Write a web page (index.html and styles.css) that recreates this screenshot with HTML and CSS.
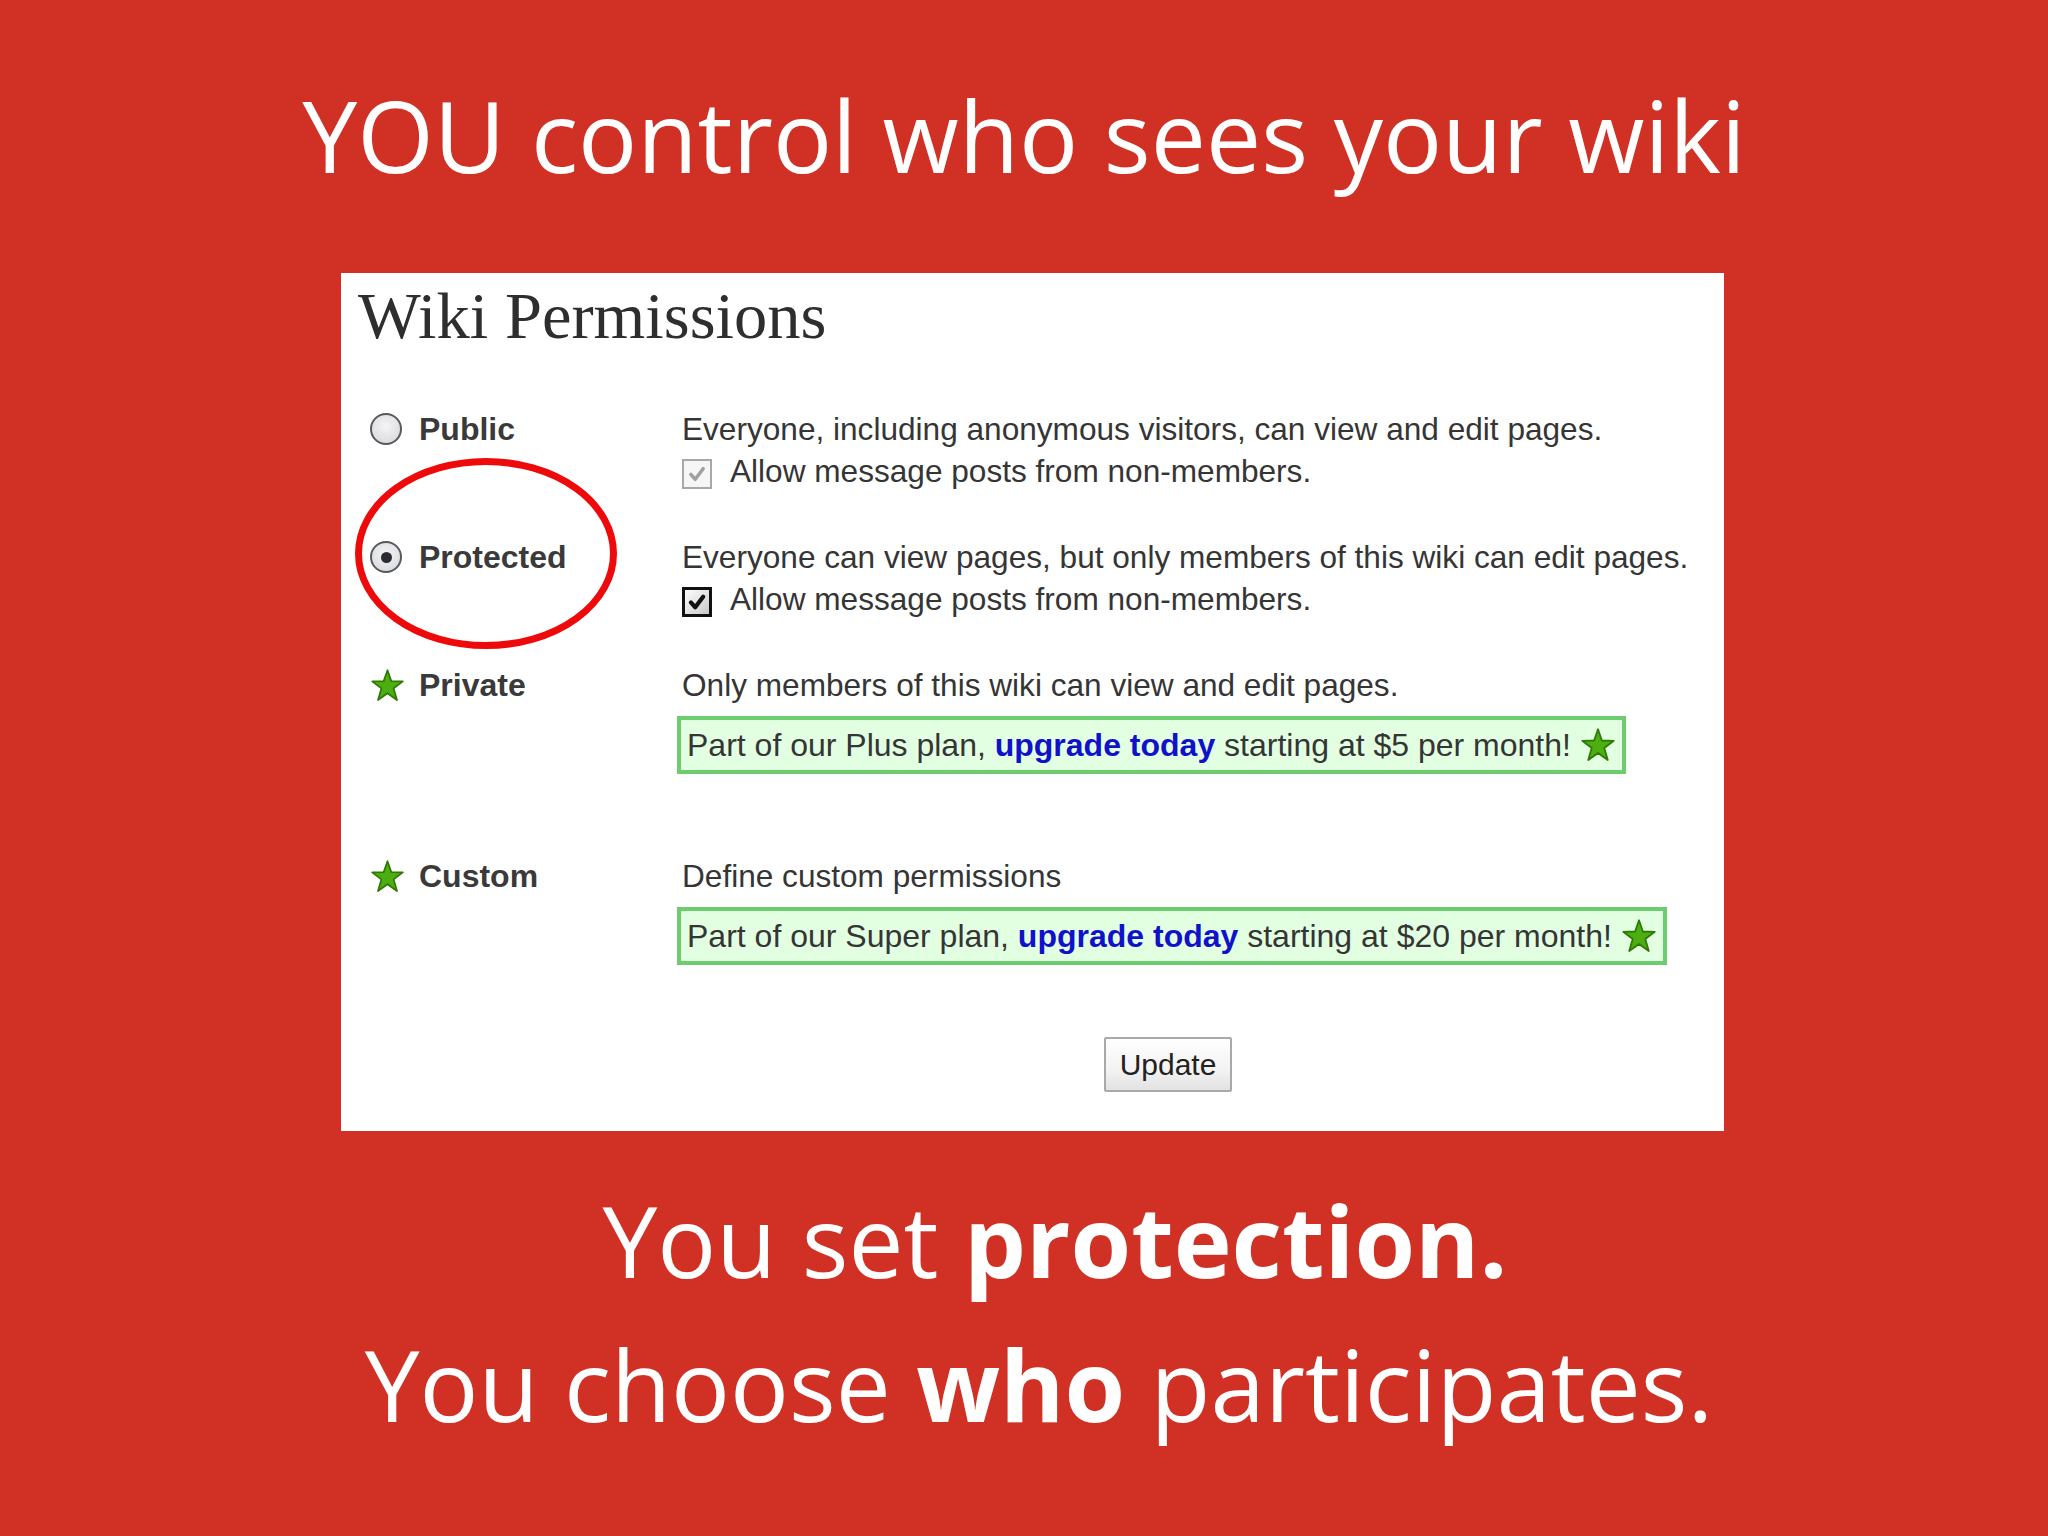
FILE: index.html
```html
<!DOCTYPE html>
<html lang="en">
<head>
<meta charset="utf-8">
<title>YOU control who sees your wiki</title>
<link rel="stylesheet" href="styles.css">
</head>
<body>
<div class="slide">
  <h1 class="headline">YOU control who sees your wiki</h1>

  <div class="panel">
    <h2 class="panel-title">Wiki Permissions</h2>

    <div class="perm-grid">
      <div class="opt">
        <span class="radio"></span><span class="opt-name">Public</span>
      </div>
      <div class="desc">
        <p class="line">Everyone, including anonymous visitors, can view and edit pages.</p>
        <p class="line chk-line"><span class="chk chk-disabled"><svg viewBox="0 0 10 10"><path d="M2.2 5.2 L4.2 7.4 L7.8 2.6" /></svg></span>Allow message posts from non-members.</p>
      </div>

      <div class="opt">
        <span class="radio radio-on"></span><span class="opt-name">Protected</span>
      </div>
      <div class="desc">
        <p class="line">Everyone can view pages, but only members of this wiki can edit pages.</p>
        <p class="line chk-line"><span class="chk chk-on"><svg viewBox="0 0 10 10"><path d="M2.2 5.2 L4.2 7.4 L7.8 2.6" /></svg></span>Allow message posts from non-members.</p>
      </div>

      <div class="opt">
        <svg class="star" viewBox="0 0 24 24"><path d="M12 1.5 L14.6 9 L22.5 9.2 L16.2 14 L18.5 22 L12 17.3 L5.5 22 L7.8 14 L1.5 9.2 L9.4 9 Z"/></svg><span class="opt-name">Private</span>
      </div>
      <div class="desc desc-plan">
        <p class="line">Only members of this wiki can view and edit pages.</p>
        <div class="upsell">Part of our Plus plan,&nbsp;<a class="up-link">upgrade today</a>&nbsp;starting at $5 per month!<svg class="star star-sm" viewBox="0 0 24 24"><path d="M12 1.5 L14.6 9 L22.5 9.2 L16.2 14 L18.5 22 L12 17.3 L5.5 22 L7.8 14 L1.5 9.2 L9.4 9 Z"/></svg></div>
      </div>

      <div class="opt">
        <svg class="star" viewBox="0 0 24 24"><path d="M12 1.5 L14.6 9 L22.5 9.2 L16.2 14 L18.5 22 L12 17.3 L5.5 22 L7.8 14 L1.5 9.2 L9.4 9 Z"/></svg><span class="opt-name">Custom</span>
      </div>
      <div class="desc">
        <p class="line">Define custom permissions</p>
        <div class="upsell">Part of our Super plan,&nbsp;<a class="up-link">upgrade today</a>&nbsp;starting at $20 per month!<svg class="star star-sm" viewBox="0 0 24 24"><path d="M12 1.5 L14.6 9 L22.5 9.2 L16.2 14 L18.5 22 L12 17.3 L5.5 22 L7.8 14 L1.5 9.2 L9.4 9 Z"/></svg></div>
      </div>
    </div>

    <div class="actions">
      <button class="btn" type="button">Update</button>
    </div>

    <svg class="ring" viewBox="0 0 262 191"><ellipse cx="131" cy="95.5" rx="127.5" ry="92" /></svg>
  </div>

  <div class="tagline">
    <p class="tag-line tag-first">You set <b>protection.</b></p>
    <p class="tag-line tag-second">You choose <b>who</b> participates.</p>
  </div>
</div>
</body>
</html>
```

FILE: styles.css
```css
html, body {
  margin: 0;
  padding: 0;
}
body {
  background: #d13124;
  width: 2048px;
  height: 1536px;
  overflow: hidden;
}
.slide {
  width: 2048px;
  height: 1536px;
  display: flex;
  flex-direction: column;
  font-family: "Open Sans", "Noto Sans", sans-serif;
  color: #ffffff;
}
.headline {
  margin: 75px 0 0 0;
  height: 120px;
  line-height: 120px;
  font-size: 98.4px;
  font-weight: 400;
  text-align: center;
}
.panel {
  position: relative;
  margin: 78px 0 0 341px;
  width: 1383px;
  height: 858px;
  box-sizing: border-box;
  background: #ffffff;
  padding: 6px 0 0 17px;
  color: #353535;
  font-family: "Liberation Sans", Arial, sans-serif;
}
.panel-title {
  margin: 0;
  font-family: "Liberation Serif", "Times New Roman", serif;
  font-weight: 400;
  font-size: 66.5px;
  line-height: 73px;
  height: 73px;
  color: #2e2e2e;
}
.perm-grid {
  margin: 56px 0 0 12px;
  display: grid;
  grid-template-columns: 312px 1fr;
  row-gap: 44px;
}
.opt {
  display: flex;
  align-items: center;
  height: 42px;
  gap: 17px;
}
.opt-name {
  font-weight: 700;
  font-size: 32px;
  line-height: 42px;
  color: #3a3a3a;
}
.radio {
  width: 28px;
  height: 28px;
  border-radius: 50%;
  border: 2px solid #555a60;
  background: radial-gradient(circle at 50% 40%, #f4f4f6 0%, #dcdce0 80%);
  display: flex;
  align-items: center;
  justify-content: center;
  flex: none;
}
.radio-on::after {
  content: "";
  width: 11px;
  height: 11px;
  border-radius: 50%;
  background: #2b2b33;
}
.star {
  width: 35px;
  height: 35px;
  flex: none;
  margin-right: -3px;
}
.star path {
  fill: #4cae10;
  stroke: #2f7a06;
  stroke-width: 1.2;
  stroke-linejoin: round;
}
.desc {
  display: flex;
  flex-direction: column;
  align-items: flex-start;
  font-size: 31.6px;
}
.desc-plan {
  padding-bottom: 37px;
}
.line {
  margin: 0;
  line-height: 42px;
  height: 42px;
  white-space: nowrap;
}
.chk-line {
  display: flex;
  align-items: center;
  gap: 18px;
}
.chk {
  width: 30px;
  height: 30px;
  box-sizing: border-box;
  display: flex;
  align-items: center;
  justify-content: center;
  margin-top: 6px;
  flex: none;
}
.chk svg {
  width: 22px;
  height: 22px;
}
.chk path {
  fill: none;
  stroke-width: 1.6;
  stroke-linecap: round;
  stroke-linejoin: round;
}
.chk-disabled {
  border: 2px solid #a8a8a8;
  background: #f6f6f6;
}
.chk-disabled path {
  stroke: #a0a0a0;
}
.chk-on {
  border: 3px solid #111111;
  background: linear-gradient(135deg, #ffffff 0%, #c8c8c8 100%);
}
.chk-on path {
  stroke: #111111;
  stroke-width: 1.9;
}
.upsell {
  margin: 10px 0 0 -5px;
  height: 58px;
  box-sizing: border-box;
  border: 4px solid #6dcc6d;
  background: #e2ffe2;
  display: flex;
  align-items: center;
  padding: 0 6px 0 6px;
  white-space: nowrap;
  line-height: 50px;
  font-size: 32px;
}
.up-link {
  color: #1111cc;
  font-weight: 700;
}
.star-sm {
  margin: 0 0 0 9px;
  width: 36px;
  height: 36px;
}
.actions {
  margin: 72px 0 0 746px;
}
.btn {
  width: 128px;
  height: 55px;
  border: 2px solid #a9a9a9;
  border-radius: 2px;
  background: linear-gradient(#ffffff 0%, #f3f3f3 60%, #e2e2e2 100%);
  font-family: "Liberation Sans", Arial, sans-serif;
  font-size: 30px;
  color: #222222;
  padding: 0;
}
.ring {
  position: absolute;
  left: 14px;
  top: 185px;
  width: 262px;
  height: 191px;
}
.ring ellipse {
  fill: none;
  stroke: #ee0a0a;
  stroke-width: 7;
}
.tagline {
  margin-top: 37px;
  text-align: center;
}
.tag-line {
  margin: 0;
  font-size: 98px;
  line-height: 144px;
  height: 144px;
}
.tag-first {
  padding-left: 62px;
}
.tag-second {
  padding-left: 30px;
}
.tag-line b {
  font-weight: 700;
}
```
